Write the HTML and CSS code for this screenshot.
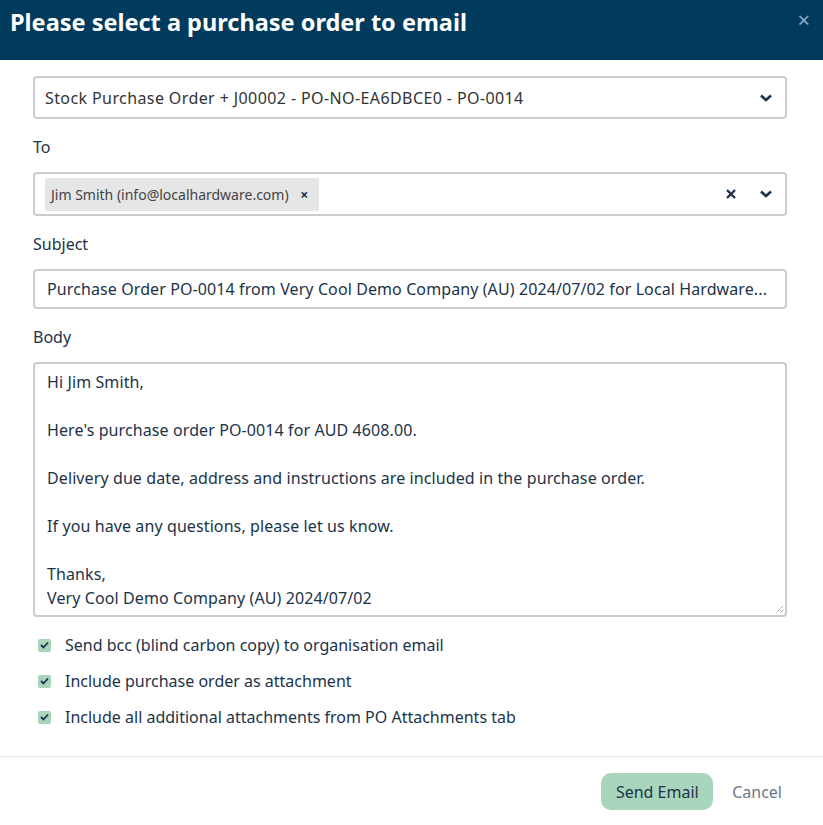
FILE: index.html
```html
<!DOCTYPE html>
<html>
<head>
    <link rel="stylesheet" href="styles.css">
</head>
<body>
    <div class="modal">
        <div class="modal-header">
            <h1 class="modal-title">Please select a purchase order to email</h1>
            <span class="modal-close">&times;</span>
        </div>
        <div class="modal-body">
            <div class="select-box">
                <div class="select-value spaced">Stock Purchase Order + J00002 - PO-NO-EA6DBCE0 - PO-0014</div>
                <div class="select-icons">
                    <svg class="chevron" width="14" height="10" viewBox="0 0 14 10"><path d="M2 2.5 L7 7 L12 2.5" fill="none" stroke="#1c3349" stroke-width="2.6"/></svg>
                </div>
            </div>

            <label class="field-label">To</label>
            <div class="select-box">
                <div class="select-value">
                    <span class="chip">Jim Smith (info@localhardware.com) <span class="chip-x">&times;</span></span>
                </div>
                <div class="select-icons">
                    <svg class="clear" width="12" height="12" viewBox="0 0 12 12"><path d="M2 2 L10 10 M10 2 L2 10" fill="none" stroke="#1c3349" stroke-width="2.4"/></svg>
                    <svg class="chevron" width="14" height="10" viewBox="0 0 14 10"><path d="M2 2.5 L7 7 L12 2.5" fill="none" stroke="#1c3349" stroke-width="2.6"/></svg>
                </div>
            </div>

            <label class="field-label">Subject</label>
            <div class="text-input">Purchase Order PO-0014 from Very Cool Demo Company (AU) 2024/07/02 for Local Hardware...</div>

            <label class="field-label">Body</label>
            <div class="textarea">
                <div class="textarea-text">Hi Jim Smith,

Here's purchase order PO-0014 for AUD 4608.00.

Delivery due date, address and instructions are included in the purchase order.

If you have any questions, please let us know.

Thanks,
Very Cool Demo Company (AU) 2024/07/02</div>
                <svg class="grip" width="10" height="10" viewBox="0 0 10 10"><path d="M9 2 L2 9 M9 6 L6 9" stroke="#777" stroke-width="1" stroke-dasharray="1 1"/></svg>
            </div>

            <div class="checks">
                <div class="check-row"><span class="checkbox"><svg width="9" height="8" viewBox="0 0 9 8"><path d="M1 4 L3.5 6.5 L8 1.5" fill="none" stroke="#1c3349" stroke-width="1.8"/></svg></span>Send bcc (blind carbon copy) to organisation email</div>
                <div class="check-row"><span class="checkbox"><svg width="9" height="8" viewBox="0 0 9 8"><path d="M1 4 L3.5 6.5 L8 1.5" fill="none" stroke="#1c3349" stroke-width="1.8"/></svg></span>Include purchase order as attachment</div>
                <div class="check-row"><span class="checkbox"><svg width="9" height="8" viewBox="0 0 9 8"><path d="M1 4 L3.5 6.5 L8 1.5" fill="none" stroke="#1c3349" stroke-width="1.8"/></svg></span>Include all additional attachments from PO Attachments tab</div>
            </div>
        </div>
        <div class="modal-footer">
            <button class="btn-send">Send Email</button>
            <button class="btn-cancel">Cancel</button>
        </div>
    </div>
</body>
</html>
```

FILE: styles.css
```css
body {
    margin: 0;
    background-color: rgb(255, 255, 255);
    font-family: "Noto Sans", "Open Sans", sans-serif;
    color: rgb(28, 51, 73);
}
.modal {
    width: 823px;
}
.modal-header {
    height: 60px;
    box-sizing: border-box;
    background-color: rgb(0, 59, 93);
    display: flex;
    align-items: flex-start;
    justify-content: space-between;
    padding: 6px 13px 0 10px;
}
.modal-title {
    margin: 0;
    font-size: 23.5px;
    line-height: 32px;
    font-weight: bold;
    color: rgb(255, 255, 255);
}
.modal-close {
    color: rgb(140, 170, 195);
    font-size: 22px;
    line-height: 26px;
}
.modal-body {
    padding: 16px 36px 0 33px;
}
.select-box {
    display: flex;
    align-items: center;
    border: 2px solid rgb(204, 204, 204);
    border-radius: 4px;
    height: 44px;
    box-sizing: border-box;
}
.select-box:first-child {
    height: 43px;
}
.select-value {
    flex: 1;
    padding: 0 10px;
    font-size: 16px;
    color: rgb(51, 51, 51);
    white-space: nowrap;
    overflow: hidden;
}
.select-value.spaced {
    letter-spacing: 0.4px;
}
.select-icons {
    display: flex;
    align-items: center;
    gap: 22px;
    padding-right: 12px;
}
.chip {
    display: inline-block;
    background-color: rgb(230, 230, 230);
    border-radius: 2px;
    padding: 6px 11px 6px 6px;
    font-size: 14px;
    line-height: 21px;
    color: rgb(68, 68, 68);
}
.chip-x {
    margin-left: 8px;
    font-weight: bold;
    color: rgb(28, 51, 73);
}
.field-label {
    display: block;
    font-size: 16px;
    line-height: 24px;
    padding-top: 16px;
    margin-bottom: 13px;
}
.text-input {
    border: 2px solid rgb(204, 204, 204);
    border-radius: 4px;
    height: 40px;
    box-sizing: border-box;
    padding: 0 12px;
    font-size: 16px;
    line-height: 36px;
    letter-spacing: 0.1px;
    white-space: nowrap;
    overflow: hidden;
}
.textarea {
    position: relative;
    border: 2px solid rgb(204, 204, 204);
    border-radius: 4px;
    height: 255px;
    box-sizing: border-box;
    padding: 6px 12px;
}
.textarea-text {
    white-space: pre-wrap;
    font-size: 16px;
    line-height: 24px;
    letter-spacing: 0.1px;
}
.grip {
    position: absolute;
    right: 1px;
    bottom: 1px;
}
.checks {
    padding: 10px 0 21px 5px;
}
.check-row {
    display: flex;
    align-items: center;
    height: 36px;
    font-size: 16px;
}
.checkbox {
    width: 13px;
    height: 13px;
    border-radius: 2px;
    background-color: rgb(168, 213, 187);
    display: inline-flex;
    align-items: center;
    justify-content: center;
    margin-right: 14px;
}
.modal-footer {
    border-top: 1px solid rgb(230, 230, 230);
    display: flex;
    justify-content: flex-end;
    align-items: center;
    padding: 16px 37px 13px 0;
}
.btn-send {
    font-family: inherit;
    font-size: 16px;
    background-color: rgb(168, 213, 187);
    color: rgb(28, 51, 73);
    border: none;
    border-radius: 10px;
    height: 37px;
    padding: 0 14.5px;
}
.btn-cancel {
    font-family: inherit;
    font-size: 16px;
    background: none;
    border: none;
    color: rgb(107, 119, 133);
    margin-left: 15px;
    padding: 0 4px;
}
```
